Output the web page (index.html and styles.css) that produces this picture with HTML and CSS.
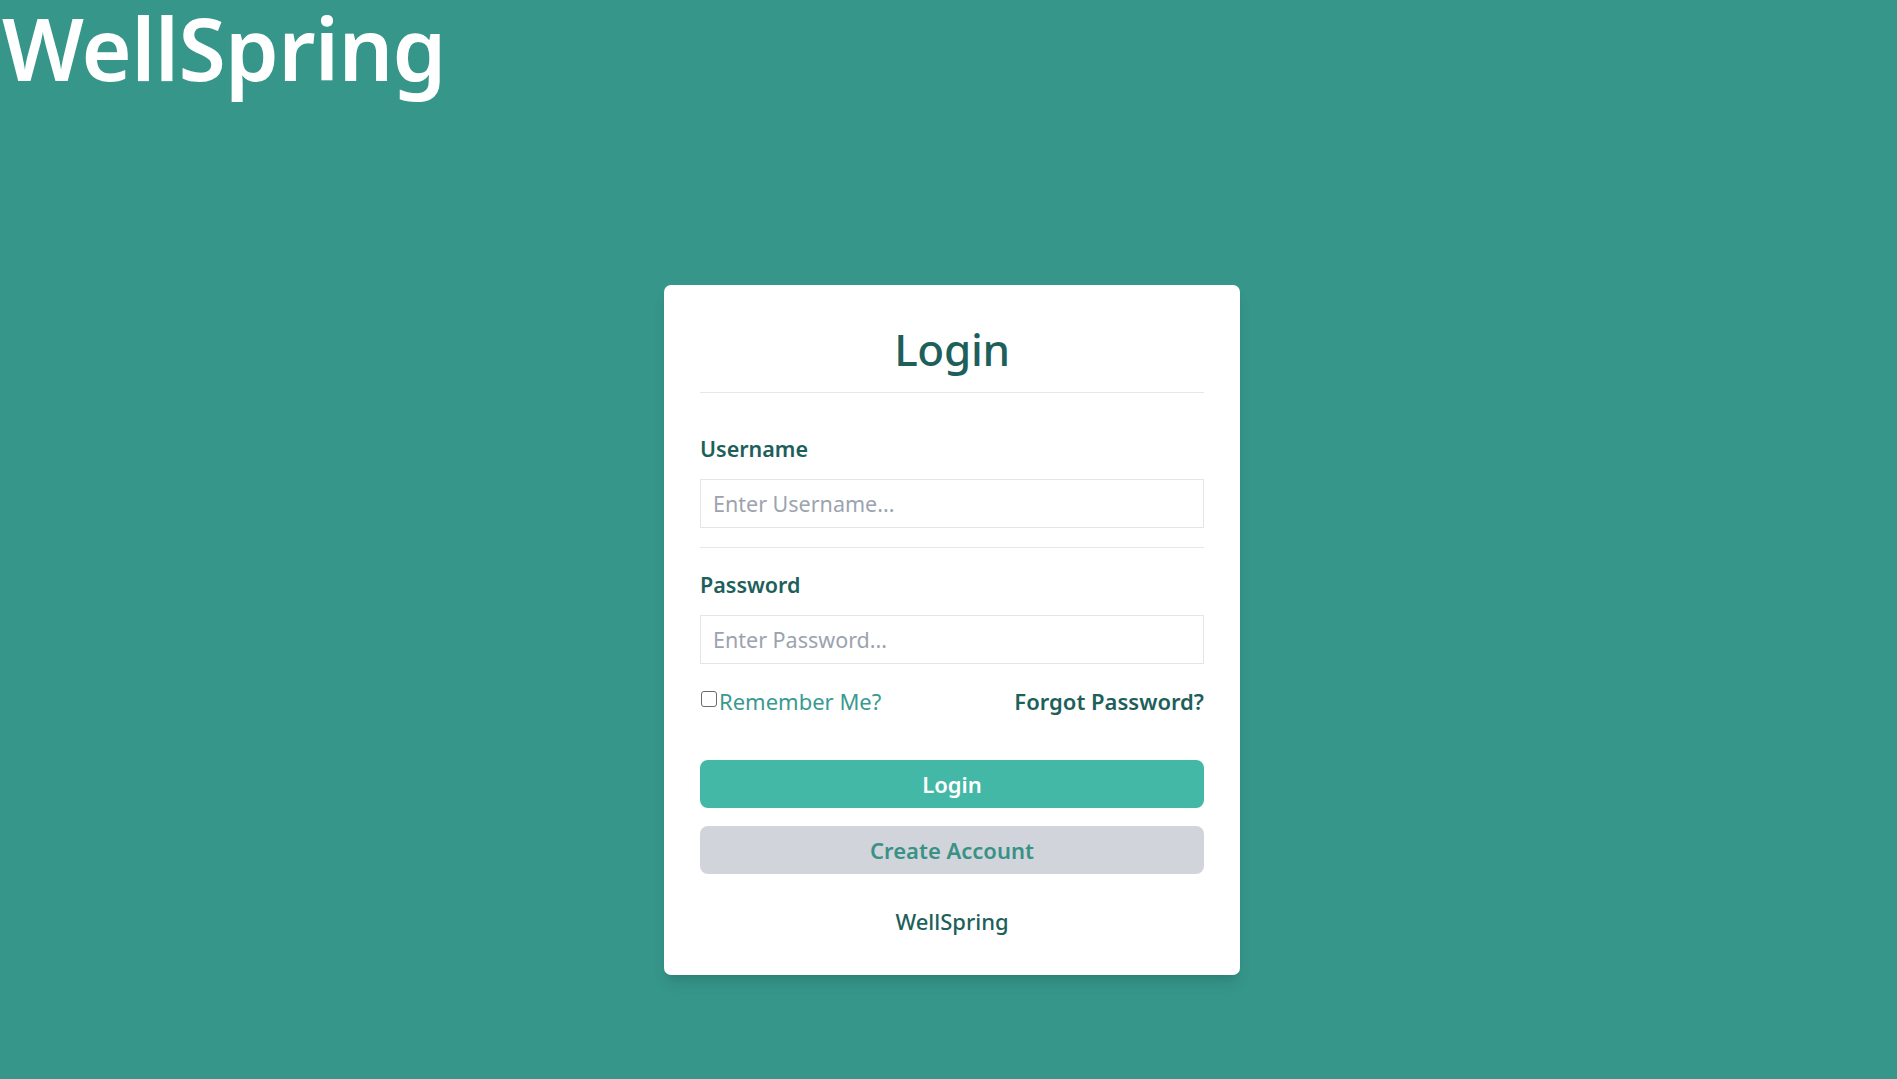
FILE: index.html
```html
<!DOCTYPE html>
<html lang="en">
<head>
<meta charset="utf-8">
<title>WellSpring - Login</title>
<link rel="stylesheet" href="styles.css">
</head>
<body>
<header class="site-header">
  <h1 class="brand">WellSpring</h1>
</header>
<main class="main">
  <form class="card">
    <h2 class="card-title">Login</h2>
    <div class="field field-first">
      <label class="label" for="username">Username</label>
      <input class="input" id="username" type="text" placeholder="Enter Username...">
    </div>
    <div class="field">
      <label class="label" for="password">Password</label>
      <input class="input" id="password" type="password" placeholder="Enter Password...">
    </div>
    <div class="options">
      <label class="remember"><input class="check" type="checkbox">Remember Me?</label>
      <a class="forgot" href="#">Forgot Password?</a>
    </div>
    <div class="actions">
      <button class="btn btn-primary" type="button">Login</button>
      <button class="btn btn-secondary" type="button">Create Account</button>
    </div>
    <p class="card-footer">WellSpring</p>
  </form>
</main>
</body>
</html>
```
FILE: styles.css
```css
html, body {
  margin: 0;
  padding: 0;
}
body {
  background: #36968a;
  font-family: "Noto Sans", "Open Sans", sans-serif;
  min-height: 1079px;
}
.site-header {
  padding-left: 2px;
}
.brand {
  margin: 0;
  padding-bottom: 14px;
  font-size: 86px;
  line-height: 96px;
  font-weight: 600;
  color: #ffffff;
  letter-spacing: -0.7px;
}
.main {
  display: flex;
  justify-content: center;
  padding-top: 175px;
  padding-left: 7px;
}
.card {
  width: 504px;
  background: #ffffff;
  border-radius: 7px;
  padding: 37px 36px 39px;
  box-shadow: 0 10px 15px -3px rgba(0,0,0,0.12), 0 4px 6px -4px rgba(0,0,0,0.1);
  display: flex;
  flex-direction: column;
  color: #1e5f5b;
}
.card-title {
  margin: 0;
  font-size: 44px;
  line-height: 54px;
  font-weight: 500;
  text-align: center;
  padding-bottom: 16px;
  border-bottom: 1px solid #e5e7eb;
  letter-spacing: -0.3px;
}
.field {
  display: flex;
  flex-direction: column;
  gap: 15px;
  padding-bottom: 19px;
  border-bottom: 1px solid #e5e7eb;
  margin-top: 22px;
}
.field-first {
  margin-top: 41px;
}
.field + .field {
  border-bottom: none;
  padding-bottom: 0;
}
.label {
  font-size: 21.5px;
  line-height: 30px;
  font-weight: 600;
  color: #1e5f5b;
}
.input {
  height: 49px;
  box-sizing: border-box;
  border: 1px solid #e3e5ea;
  border-radius: 0;
  padding: 0 12px;
  font-family: inherit;
  font-size: 21.5px;
  color: #1e5f5b;
  outline: none;
  margin: 0;
}
.input::placeholder {
  color: #9ca3af;
}
.options {
  display: flex;
  justify-content: space-between;
  align-items: center;
  margin-top: 22px;
  line-height: 30px;
  font-size: 22px;
}
.remember {
  display: flex;
  align-items: center;
  color: #3a9a90;
}
.check {
  appearance: none;
  -webkit-appearance: none;
  width: 16px;
  height: 16px;
  margin: 0 2px 4px 1px;
  border: 1.5px solid #6b6b6b;
  border-radius: 3px;
  background: #ffffff;
  box-sizing: border-box;
}
.forgot {
  color: #1e5f5b;
  font-weight: 600;
  text-decoration: none;
}
.actions {
  display: flex;
  flex-direction: column;
  gap: 18px;
  margin-top: 44px;
}
.btn {
  height: 48px;
  border: none;
  border-radius: 8px;
  font-family: inherit;
  font-size: 22px;
  font-weight: 600;
  cursor: pointer;
}
.btn-primary {
  background: #44b8a6;
  color: #ffffff;
}
.btn-secondary {
  background: #d1d5db;
  color: #3a9186;
}
.card-footer {
  margin: 32px 0 0;
  text-align: center;
  font-size: 22px;
  line-height: 30px;
  font-weight: 500;
  color: #1e5f5b;
}
```
